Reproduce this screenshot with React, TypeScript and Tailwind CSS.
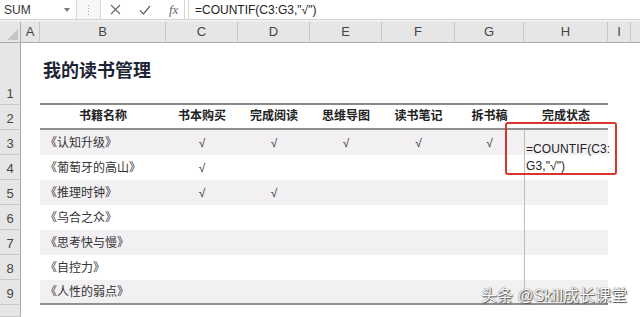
import React from "react";

const cols = ["A", "B", "C", "D", "E", "F", "G", "H", "I"];

const heads = ["书籍名称", "书本购买", "完成阅读", "思维导图", "读书笔记", "拆书稿", "完成状态"];

const books: { name: string; marks: boolean[] }[] = [
	{ name: "《认知升级》", marks: [true, true, true, true, true] },
	{ name: "《葡萄牙的高山》", marks: [true, false, false, false, false] },
	{ name: "《推理时钟》", marks: [true, true, false, false, false] },
	{ name: "《乌合之众》", marks: [false, false, false, false, false] },
	{ name: "《思考快与慢》", marks: [false, false, false, false, false] },
	{ name: "《自控力》", marks: [false, false, false, false, false] },
	{ name: "《人性的弱点》", marks: [false, false, false, false, false] },
];

function RowHead({ n }: { n?: string }) {
	return (
		<div className="bg-[#e6e6e6] border-b border-r border-b-[#c9c9c9] border-r-[#ababab] flex items-end justify-center pb-[2px] text-[13px] leading-[16px] text-[#444]">
			{n}
		</div>
	);
}

function FormulaBar() {
	return (
		<div className="h-[20px] flex items-stretch bg-white border-b border-[#d6d6d6]">
			{/* name box */}
			<div className="w-[77px] flex items-center justify-between pl-[4px] pr-[6px] border-r border-[#d6d6d6]">
				<span className="text-[12px] text-[#333]">SUM</span>
				<svg width="6" height="4" viewBox="0 0 6 4">
					<path d="M0 0h6L3 4z" fill="#777" />
				</svg>
			</div>
			<div className="w-[23px] flex items-center justify-center bg-[#f7f7f7]">
				<div className="flex flex-col gap-[2px]">
					<span className="w-[1px] h-[1px] bg-[#aaa]" />
					<span className="w-[1px] h-[1px] bg-[#aaa]" />
					<span className="w-[1px] h-[1px] bg-[#aaa]" />
					<span className="w-[1px] h-[1px] bg-[#aaa]" />
				</div>
			</div>
			<div className="w-[85px] flex items-center border-l border-r border-[#d6d6d6] pl-[9px] gap-[18px]">
				<svg width="11" height="11" viewBox="0 0 11 11">
					<path d="M1 1l9 9M10 1l-9 9" stroke="#666" strokeWidth="1.1" />
				</svg>
				<svg width="12" height="10" viewBox="0 0 12 10">
					<path d="M1 5.5l3.5 3.5L11 1" stroke="#666" strokeWidth="1.3" fill="none" />
				</svg>
				<span className="text-[13px] italic text-[#666] font-['Liberation_Serif',serif] leading-none">
					fx
				</span>
			</div>
			<div className="w-[3px]" />
			<div className="flex-1 flex items-center pl-[6px] border-l border-[#d6d6d6] text-[12px] text-[#222]">
				=COUNTIF(C3:G3,"√")
			</div>
		</div>
	);
}

export default function App() {
	return (
		<div className="w-[640px] h-[317px] overflow-hidden relative bg-white font-['Liberation_Sans','Noto_Sans_CJK_SC',sans-serif]">
			<FormulaBar />
			<div className="h-[2px] bg-[#efefef]" />

			<div className="grid grid-cols-[21px_19px_126px_72px_72px_72px_73px_69px_84px_23px_9px] grid-rows-[21px_62px_repeat(8,25px)_12px]">
				{/* column header */}
				<div className="bg-[#e6e6e6] border-b border-r border-[#ababab] relative">
					<svg className="absolute right-[2px] bottom-[2px]" width="11" height="11" viewBox="0 0 11 11">
						<path d="M11 0v11H0z" fill="#c4c4c4" />
					</svg>
				</div>
				{cols.map((c) => (
					<div
						key={c}
						className="bg-[#e6e6e6] border-b border-r border-b-[#ababab] border-r-[#c9c9c9] flex items-center justify-center text-[13px] text-[#444]"
					>
						{c}
					</div>
				))}
				<div className="bg-[#e6e6e6] border-b border-[#ababab]" />

				{/* row 1 */}
				<RowHead n="1" />
				<div />
				<div className="flex items-center pl-[3px] whitespace-nowrap text-[18px] font-bold text-[#1c2536] pb-[1px] -mt-[4px]">
					我的读书管理
				</div>
				<div />
				<div />
				<div />
				<div />
				<div />
				<div />
				<div />
				<div />

				{/* row 2 - table head */}
				<RowHead n="2" />
				<div />
				{heads.map((h) => (
					<div
						key={h}
						className="border-t-2 border-b-2 border-t-[#8a8a8a] border-b-[#8f8f8f] flex items-center justify-center text-[12px] font-bold text-[#222] -mt-[2px] pb-[1px]"
					>
						{h}
					</div>
				))}
				<div />
				<div />

				{/* rows 3-9 */}
				{books.map((b, i) => {
					const band = i % 2 === 0;
					const last = i === books.length - 1;
					return (
						<React.Fragment key={b.name}>
							<RowHead n={String(i + 3)} />
							<div />
							<div
								className={`flex items-center pl-[5px] text-[12px] text-[#333] ${band ? "bg-[#f2f0f2]" : "bg-white"} ${last ? "border-b-2 border-[#8f8f8f]" : ""}`}
							>
								{b.name}
							</div>
							{b.marks.map((m, j) => (
								<div
									key={j}
									className={`flex items-center justify-center text-[12px] text-[#333] ${band ? "bg-[#f2f0f2]" : "bg-white"} ${last ? "border-b-2 border-[#8f8f8f]" : ""}`}
								>
									{m ? "√" : ""}
								</div>
							))}
							<div
								className={`border-l border-l-[#bdbdbd] ${band ? "bg-[#f2f0f2]" : "bg-white"} ${last ? "border-b-2 border-b-[#8f8f8f]" : ""}`}
							/>
							<div />
							<div />
						</React.Fragment>
					);
				})}

				{/* row 10 partial */}
				<RowHead />
			</div>

			{/* editing cell H3 */}
			<div className="absolute left-[526px] top-[141px] text-[12px] leading-[17px] text-[#222] tracking-[0.1px]">
				<div>=COUNTIF(C3:</div>
				<div>G3,"√")</div>
			</div>
			<div className="absolute left-[505px] top-[122px] w-[112px] h-[53px] border-2 border-[#d7362d] rounded-[3px]" />

			{/* watermark */}
			<div className="absolute left-[481px] top-[286px] text-[16px] leading-[20px] text-white whitespace-nowrap [text-shadow:0_0_1px_#333,1px_1px_1px_#555]">
				头条 @Skill成长课堂
			</div>
		</div>
	);
}
